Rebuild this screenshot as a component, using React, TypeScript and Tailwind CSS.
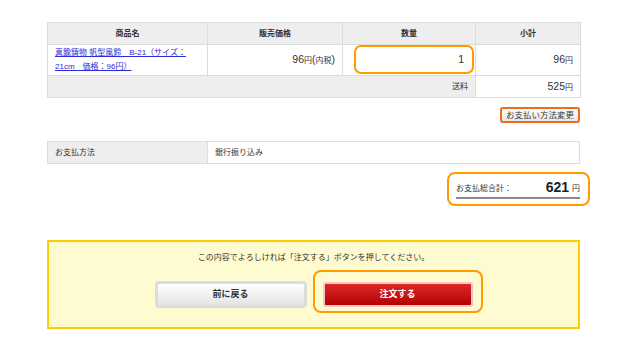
function Num({ children }: { children: React.ReactNode }) {
  return <span className="text-[10.5px]">{children}</span>
}

export default function App() {
  return (
    <div className="min-h-[347px] w-[630px] bg-white text-[8px] text-[#333] [font-family:'Liberation_Sans','Noto_Sans_CJK_JP',sans-serif]">
      <div className="ml-[47px] w-[533px] pt-[22px]">
        {/* cart table */}
        <table className="w-[533px] table-fixed border-collapse border border-[#dcdcdc]">
          <colgroup>
            <col className="w-[160px]" />
            <col className="w-[135px]" />
            <col className="w-[133px]" />
            <col className="w-[105px]" />
          </colgroup>
          <thead>
            <tr className="h-[22px] bg-[#eeeeee]">
              <th className="border border-[#dcdcdc] font-bold">商品名</th>
              <th className="border border-[#dcdcdc] font-bold">販売価格</th>
              <th className="border border-[#dcdcdc] font-bold">数量</th>
              <th className="border border-[#dcdcdc] font-bold">小計</th>
            </tr>
          </thead>
          <tbody>
            <tr className="h-[31px]">
              <td className="border border-[#dcdcdc] px-[7px] leading-[14px]">
                <a href="#" className="text-[#2b2bd8] underline">
                  真鍮鋳物 帆型風鈴　B-21（サイズ：
                  <br />
                  21cm　価格：96円）
                </a>
              </td>
              <td className="border border-[#dcdcdc] px-[7px] text-right">
                <Num>96</Num>円<Num>(</Num>内税<Num>)</Num>
              </td>
              <td className="relative border border-[#dcdcdc] px-[11px] text-right">
                <Num>1</Num>
                <span className="absolute top-0 bottom-[1px] left-[11px] right-[1px] rounded-[7px] border-2 border-[#ff9a00]" />
              </td>
              <td className="border border-[#dcdcdc] px-[7px] text-right">
                <Num>96</Num>円
              </td>
            </tr>
            <tr className="h-[22px]">
              <td colSpan={3} className="border border-[#dcdcdc] bg-[#eeeeee] px-[7px] text-right">
                送料
              </td>
              <td className="border border-[#dcdcdc] px-[7px] text-right">
                <Num>525</Num>円
              </td>
            </tr>
          </tbody>
        </table>

        {/* change payment */}
        <div className="mt-[9px] flex justify-end">
          <button className="h-[16px] rounded-[3px] border-2 border-[#f26a1b] bg-gradient-to-b from-white to-[#e6e6e6] px-[4px] text-[8.5px] leading-[12px] text-[#333]">
            お支払い方法変更
          </button>
        </div>

        {/* payment method */}
        <table className="mt-[18px] w-[533px] table-fixed border-collapse border border-[#dcdcdc]">
          <colgroup>
            <col className="w-[160px]" />
            <col />
          </colgroup>
          <tbody>
            <tr className="h-[22px]">
              <td className="border border-[#dcdcdc] bg-[#eeeeee] px-[7px]">お支払方法</td>
              <td className="border border-[#dcdcdc] px-[7px]">銀行振り込み</td>
            </tr>
          </tbody>
        </table>

        {/* total */}
        <div className="mt-[8px] flex justify-end">
          <div className="-mr-[10px] h-[34px] w-[143px] rounded-[8px] border-2 border-[#ff9a00] pl-[7px] pr-[8px] pt-[5px]">
            <div className="flex items-end justify-between border-b-2 border-[#8a8a8a] pb-[2px]">
              <span className="text-[8px] leading-[12px]">お支払総合計：</span>
              <span className="flex items-end gap-[3px]">
                <span className="text-[14px] font-bold leading-[16px] text-[#222]">621</span>
                <span className="text-[8px] leading-[12px]">円</span>
              </span>
            </div>
          </div>
        </div>

        {/* confirm box */}
        <div className="mt-[34px] flex h-[89px] flex-col items-center border-2 border-[#ffcc00] bg-[#fffbd0] pt-[10px]">
          <p className="text-[8px] leading-[12px]">この内容でよろしければ「注文する」ボタンを押してください。</p>
          <div className="mt-[17px] flex items-center gap-[16px]">
            <button className="h-[27px] w-[152px] rounded-[4px] border-[3px] border-[#dcdcdc] bg-gradient-to-b from-white to-[#e4e4e4] text-[9px] font-bold text-[#333]">
              前に戻る
            </button>
            <div className="relative">
              <button className="h-[25px] w-[150px] rounded-[3px] border-2 border-[#f6c4c4] bg-gradient-to-b from-[#dc2626] to-[#b30000] text-[9px] font-bold text-white">
                注文する
              </button>
              <span className="absolute -top-[12px] -bottom-[6px] -left-[10px] -right-[10px] rounded-[8px] border-2 border-[#ff9a00]" />
            </div>
          </div>
        </div>
      </div>
    </div>
  )
}
